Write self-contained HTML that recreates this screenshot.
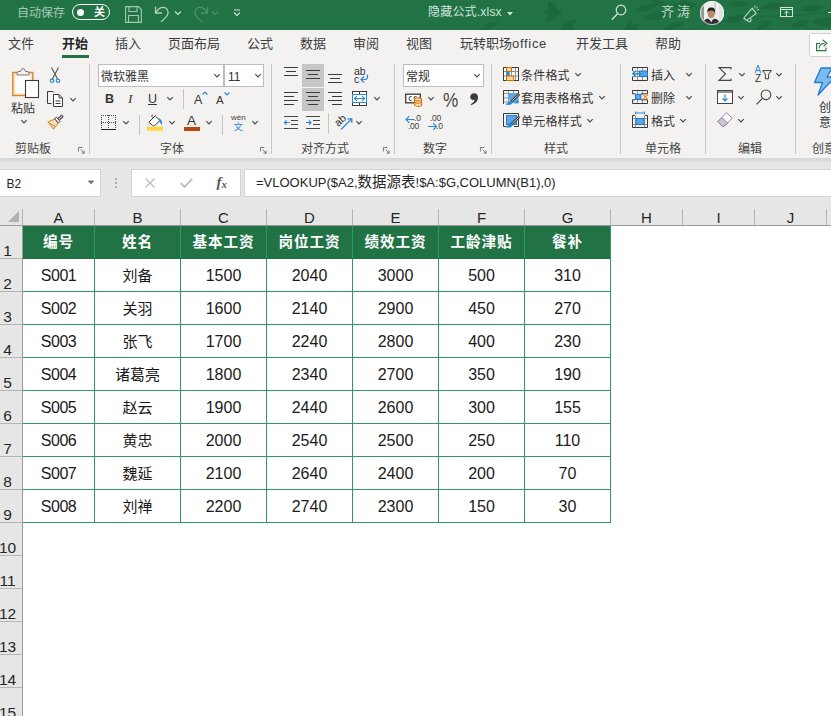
<!DOCTYPE html>
<html lang="zh-CN">
<head>
<meta charset="utf-8">
<title>隐藏公式.xlsx - Excel</title>
<style>
html,body{margin:0;padding:0;}
body{width:831px;height:716px;overflow:hidden;position:relative;background:#e6e6e6;
 font-family:"Liberation Sans","Noto Sans CJK SC",sans-serif;color:#262626;}
.abs{position:absolute;}
svg{position:absolute;overflow:visible;}
/* ---------- title bar ---------- */
#title{position:absolute;z-index:5;left:0;top:0;width:831px;height:29.5px;background:#217346;overflow:hidden;}
#title .t{position:absolute;color:#d2e4da;font-size:12px;line-height:14px;white-space:nowrap;}
/* ---------- tabs ---------- */
#tabs{position:absolute;left:0;top:29px;width:831px;height:31px;background:#f3f2f1;}
#tabs .tab{position:absolute;top:7px;font-size:13px;line-height:15px;color:#3d3d3d;white-space:nowrap;}
/* ---------- ribbon ---------- */
#ribbon{position:absolute;left:0;top:60px;width:831px;height:97.5px;background:#f3f2f1;overflow:hidden;}
#ribbon .sep{position:absolute;top:4px;width:1px;height:90px;background:#c8c6c4;}
#ribbon .lbl{position:absolute;top:81.5px;font-size:12px;line-height:14px;color:#444;white-space:nowrap;}
#ribbon .tx{position:absolute;font-size:12px;line-height:14px;color:#333;white-space:nowrap;}
#ribbon .box{position:absolute;top:4px;height:23px;background:#fff;border:1px solid #bdbdbd;box-sizing:border-box;}
#shadow{position:absolute;left:0;top:157.5px;width:831px;height:5px;background:linear-gradient(#d6d6d6,#d9d9d9 40%,#e6e6e6);}
/* ---------- formula bar ---------- */
.fbox{position:absolute;top:169px;height:28px;background:#fff;border:1px solid #d4d4d4;box-sizing:border-box;}
/* ---------- sheet ---------- */
#sheet{position:absolute;left:0;top:207px;width:831px;height:509px;background:#fff;overflow:hidden;}
#colhdr{position:absolute;left:0;top:0;width:831px;height:18px;background:#e6e6e6;border-bottom:1px solid #9b9b9b;z-index:3;}
#colhdr .c{position:absolute;top:2px;height:16px;font-size:15px;line-height:17px;color:#262626;text-align:center;border-right:1px solid #b5b5b5;box-sizing:border-box;}
#rowhdr{position:absolute;left:0;top:19px;width:22px;height:490px;background:#e6e6e6;border-right:1px solid #9b9b9b;z-index:2;}
#rowhdr .r{position:absolute;left:0;width:22px;height:33px;font-size:15.5px;line-height:16px;color:#262626;text-align:center;border-bottom:1px solid #b5b5b5;box-sizing:border-box;}
#rowhdr .r span{position:absolute;left:-7px;right:0;bottom:-1px;}
#grid{position:absolute;left:22px;top:18px;border-collapse:collapse;table-layout:fixed;}
#grid td{height:33px;padding:0;border:1px solid #2d9a66;text-align:center;font-size:16px;line-height:20px;color:#1a1a1a;background:#fff;box-sizing:border-box;}
#grid td:first-child{font-size:16px;letter-spacing:-0.5px;}
#grid tr:not(.h) td{padding-top:2px;}
#grid td:nth-child(2){font-size:15px;}
#grid tr.h td{background:#217346;color:#fff;font-weight:bold;font-size:14.6px !important;letter-spacing:0.9px;border-color:#217346 #2d9a66;}
</style>
</head>
<body>

<!-- ================= TITLE BAR ================= -->
<div id="title">
  <svg id="leaves" style="left:0;top:0" width="831" height="30" viewBox="0 0 831 30">
    <g fill="#1c683c" opacity="0.85">
      <path d="M481 30 Q486 21 499 22 Q494 30 481 30Z"/>
      <path d="M548 2 Q556 0 556.5 9 L563.5 13.5 L556.5 16 Q553 22 545 21.5 Q549 17 548.5 12.5 L543 12.5 L548 9.5 Z"/>
      <path d="M561 30 Q563 21.5 572 20 Q578.5 19 577 22 L572 24.5 Q572 28 574.5 30 Z"/>
      <path d="M624 30 Q626 22.5 632.5 21 L630.5 25 L639 24 Q636 28 637.5 30 Z"/>
      <path d="M636 10 Q644 2 658 4 Q652 14 636 10Z"/>
      <path d="M642 18 Q652 10 668 14 Q660 24 642 18Z"/>
      <path d="M650 0 Q656 8 668 8 Q666 0 650 0Z"/>
      <path d="M664 30 Q670 20 684 22 Q680 30 664 30Z"/>
      <path d="M672 6 Q682 -2 696 4 Q688 14 672 6Z"/>
      <path d="M724 22 Q732 12 746 16 Q738 26 724 22Z"/>
      <path d="M728 4 Q736 -2 748 4 Q740 10 728 4Z"/>
      <path d="M756 30 Q760 20 772 20 Q770 30 756 30Z"/>
      <path d="M760 8 Q770 0 784 4 Q776 14 760 8Z"/>
      <path d="M790 28 Q796 18 810 20 Q804 30 790 28Z"/>
      <path d="M800 10 Q810 2 824 6 Q816 16 800 10Z"/>
      <path d="M812 22 Q820 16 831 18 V26 Q822 28 812 22Z"/>
      <path d="M690 30 Q730 16 770 16 T831 10" fill="none" stroke="#1c683c" stroke-width="1.2"/>
      <path d="M770 16 Q790 22 815 30" fill="none" stroke="#1c683c" stroke-width="1"/>
    </g>
  </svg>
  <div class="t" style="left:17px;top:5.5px;color:#a9c9b6;">自动保存</div>
  <div class="abs" style="left:72px;top:4px;width:38px;height:16px;border:1px solid #fff;border-radius:8px;box-sizing:border-box;"></div>
  <div class="abs" style="left:76.5px;top:8.5px;width:7.5px;height:7.5px;border-radius:50%;background:#fff;"></div>
  <div class="t" style="left:94px;top:5px;font-size:11px;font-weight:bold;color:#fff;">关</div>

  <!-- save -->
  <svg style="left:125px;top:5.5px" width="17" height="17" viewBox="0 0 17 17">
    <path d="M0.6 0.6 H13.5 L16.4 3.5 V16.4 H0.6 Z" fill="none" stroke="#a3c8b2" stroke-width="1.1"/>
    <path d="M4 0.6 V5.5 H12 V0.6 M3.5 16.4 V9.5 H13.5 V16.4" fill="none" stroke="#a3c8b2" stroke-width="1.1"/>
  </svg>
  <!-- undo -->
  <svg style="left:154px;top:5px" width="16" height="18" viewBox="0 0 16 18">
    <path d="M1.5 1.5 V8 H8 M2 7.5 Q5.5 1.5 10.5 2.5 Q14.5 4 14 8.5 Q13.5 11.5 7 16.8" fill="none" stroke="#b4d2bf" stroke-width="1.3"/>
  </svg>
  <svg style="left:174px;top:10px" width="8" height="6" viewBox="0 0 8 6"><path d="M1 1.5 L4 4.5 L7 1.5" fill="none" stroke="#d3e3da" stroke-width="1.1"/></svg>
  <!-- redo (disabled) -->
  <svg style="left:193px;top:5px" width="16" height="18" viewBox="0 0 16 18">
    <path d="M14.5 1.5 V8 H8 M14 7.5 Q10.5 1.5 5.5 2.5 Q1.5 4 2 8.5 Q2.5 11.5 9 16.8" fill="none" stroke="#4f9069" stroke-width="1.3"/>
  </svg>
  <svg style="left:211px;top:10px" width="8" height="6" viewBox="0 0 8 6"><path d="M1 1.5 L4 4.5 L7 1.5" fill="none" stroke="#4f9069" stroke-width="1.1"/></svg>
  <!-- customise QAT -->
  <svg style="left:233px;top:9px" width="8" height="8" viewBox="0 0 8 8"><path d="M1 1 H7 M1 3.5 L4 6.5 L7 3.5" fill="none" stroke="#d3e3da" stroke-width="1.1"/></svg>
  <!-- title dropdown -->
  <svg style="left:507px;top:11.5px" width="6" height="4" viewBox="0 0 6 4"><path d="M0 0 H6 L3 3.6 Z" fill="#cfe2d6"/></svg>
  <!-- search -->
  <svg style="left:611px;top:4px" width="16" height="17" viewBox="0 0 16 17">
    <circle cx="10" cy="6" r="4.8" fill="none" stroke="#d3e3da" stroke-width="1.2"/>
    <path d="M6.5 9.7 L0.8 15.8" stroke="#d3e3da" stroke-width="1.3" fill="none"/>
  </svg>
  <!-- avatar -->
  <svg style="left:700px;top:1px" width="24" height="24" viewBox="0 0 24 24">
    <defs><clipPath id="avc"><circle cx="12" cy="12" r="12"/></clipPath></defs>
    <g clip-path="url(#avc)">
      <rect width="24" height="24" fill="#eef0ee"/>
      <rect x="0" y="0" width="4" height="24" fill="#8c978f"/>
      <rect x="14" y="0" width="2" height="14" fill="#cfd4d0"/>
      <rect x="19" y="0" width="5" height="24" fill="#dfe3df"/>
      <path d="M2 24 Q3 18.5 8 17.5 L11 20 L14.5 17.5 Q19.5 18.5 20.5 24 Z" fill="#2d2f36"/>
      <path d="M9.6 18 L11.2 21.5 L12.8 18 Z" fill="#f1f1f1"/>
      <ellipse cx="11.2" cy="12.6" rx="3.4" ry="4.6" fill="#b98a68"/>
      <path d="M7.4 12 Q6.8 6.6 11.2 6.6 Q15.8 6.6 15 12 Q14.2 9.2 11.2 9.6 Q8.2 9.2 7.4 12Z" fill="#211d1b"/>
    </g>
    <circle cx="12" cy="12" r="11.6" fill="none" stroke="#f4f6f4" stroke-width="0.8"/>
  </svg>
  <!-- feedback megaphone -->
  <svg style="left:742px;top:5px" width="18" height="18" viewBox="0 0 18 18">
    <path d="M1.8 13 L10.2 3.2 L14.2 8.6 L4.6 15.4 Z" fill="none" stroke="#c3dacb" stroke-width="1.1" stroke-linejoin="round"/>
    <path d="M5.2 15.2 Q6.8 17.6 8.8 16 Q9.6 15 8.6 13.2" fill="none" stroke="#c3dacb" stroke-width="1.1"/>
    <path d="M12.6 2.6 L13.4 0.6 M15 5.2 L17 4.4 M14 3.6 L15.8 1.8" stroke="#c3dacb" stroke-width="1" fill="none"/>
  </svg>
  <!-- ribbon display -->
  <svg style="left:780px;top:7px" width="13" height="10" viewBox="0 0 13 10">
    <rect x="0.5" y="0.5" width="12" height="9" fill="none" stroke="#d3e3da" stroke-width="1"/>
    <path d="M0.5 2.5 H12.5 M6.5 9 V4.2 M4.3 6.2 L6.5 4 L8.7 6.2" fill="none" stroke="#d3e3da" stroke-width="1"/>
  </svg>
  <div class="abs" style="left:828px;top:12px;width:6px;height:1px;background:#d3e3da;"></div>
  <div class="t" style="left:428px;top:5px;font-size:12px;letter-spacing:0.2px;">隐藏公式.xlsx</div>
  <div class="t" style="left:661px;top:5px;font-size:13px;letter-spacing:3px;color:#c3dacb;">齐涛</div>
</div>

<!-- ================= TABS ================= -->
<div id="tabs">
  <div class="tab" style="left:8px;">文件</div>
  <div class="tab" style="left:62px;font-weight:bold;color:#262626;">开始</div>
  <div class="abs" style="left:62px;top:26px;width:27px;height:3px;background:#217346;"></div>
  <div class="tab" style="left:115px;">插入</div>
  <div class="tab" style="left:168px;">页面布局</div>
  <div class="tab" style="left:247px;">公式</div>
  <div class="tab" style="left:300px;">数据</div>
  <div class="tab" style="left:353px;">审阅</div>
  <div class="tab" style="left:406px;">视图</div>
  <div class="tab" style="left:460px;">玩转职场<span style="letter-spacing:0.7px;">office</span></div>
  <div class="tab" style="left:576px;">开发工具</div>
  <div class="tab" style="left:655px;">帮助</div>
  <div class="abs" style="left:808.5px;top:3.5px;width:30px;height:24px;background:#fff;border:1px solid #d2d0ce;border-radius:3px;box-sizing:border-box;"></div>
  <svg style="left:815.5px;top:10px" width="12" height="13" viewBox="0 0 12 13">
    <path d="M4 4.5 H0.6 V11.6 H10 V8.5" fill="none" stroke="#217346" stroke-width="1.1"/>
    <path d="M3 9.5 Q3.2 4.6 8.6 4.2 M6.6 0.8 L10.8 4.2 L7.6 7.4" fill="none" stroke="#217346" stroke-width="1.1"/>
  </svg>
</div>

<!-- ================= RIBBON ================= -->
<div id="ribbon">
  <svg width="0" height="0" style="left:0;top:0">
    <defs>
      <symbol id="chev" viewBox="0 0 8 6" overflow="visible"><path d="M1.3 1.2 L4 3.9 L6.7 1.2" fill="none" stroke="#444" stroke-width="1.1"/></symbol>
      <symbol id="launch" viewBox="0 0 8 8" overflow="visible"><path d="M0.5 5 V0.5 H5 M3 3 L7 7 M7 4 V7 H4" fill="none" stroke="#666" stroke-width="1"/></symbol>
    </defs>
  </svg>

  <!-- ===== clipboard group ===== -->
  <svg style="left:11px;top:6px" width="30" height="34" viewBox="0 0 30 34">
    <rect x="1.8" y="6.5" width="20" height="23" fill="#fbe3c3" stroke="#d9882b" stroke-width="1.4"/>
    <rect x="4.2" y="8.8" width="15.2" height="18.6" fill="#fdfdfd"/>
    <path d="M6 9 V7 Q6 5.5 8 5.5 H9.5 Q10 2.5 12 2.5 Q14 2.5 14.5 5.5 H16 Q18 5.5 18 7 V9 Z" fill="#f3f2f1" stroke="#7a7a7a" stroke-width="1"/>
    <rect x="14.5" y="14.5" width="13" height="17" fill="#fff" stroke="#3b3b3b" stroke-width="1.1"/>
  </svg>
  <div class="tx" style="left:11px;top:42px;">粘贴</div>
  <svg style="left:20px;top:59px" width="8" height="6"><use href="#chev"/></svg>

  <!-- scissors -->
  <svg style="left:48px;top:6px" width="14" height="18" viewBox="0 0 14 18">
    <path d="M3.5 1.5 L9.6 13 M10.5 1.5 L4.4 13" stroke="#555" stroke-width="1.1" fill="none"/>
    <circle cx="4" cy="14.8" r="1.7" fill="none" stroke="#2b88d8" stroke-width="1.2"/>
    <circle cx="10" cy="14.8" r="1.7" fill="none" stroke="#2b88d8" stroke-width="1.2"/>
  </svg>
  <!-- copy -->
  <svg style="left:46px;top:30px" width="18" height="18" viewBox="0 0 18 18">
    <path d="M5.5 13.5 H1.5 V1.5 H7 L8 2.5" fill="none" stroke="#3b3b3b" stroke-width="1"/>
    <path d="M7.5 4.5 H13 L16.5 8 V16.5 H7.5 Z" fill="#fff" stroke="#3b3b3b" stroke-width="1"/>
    <path d="M13 4.5 V8 H16.5 M9.5 11 H14.5 M9.5 13.5 H14.5" fill="none" stroke="#3b3b3b" stroke-width="1"/>
  </svg>
  <svg style="left:69px;top:37px" width="8" height="6"><use href="#chev"/></svg>
  <!-- format painter -->
  <svg style="left:47px;top:54px" width="17" height="16" viewBox="0 0 17 16">
    <path d="M1 8 L8 5 L11 9.5 L6.5 15 Z" fill="#fbe3c3" stroke="#d9882b" stroke-width="1.1" stroke-linejoin="round"/>
    <path d="M3 9.5 L8.5 12.5" stroke="#d9882b" stroke-width="1" fill="none"/>
    <path d="M7.5 4.5 L11.5 9 L13 7.5 L9.5 3.2 Z" fill="#fff" stroke="#444" stroke-width="1"/>
    <path d="M11 4.5 L14.5 1.2 L16 2.7 L12.5 6" fill="none" stroke="#444" stroke-width="1.1"/>
  </svg>
  <div class="lbl" style="left:15px;">剪贴板</div>
  <svg style="left:78px;top:87px" width="7" height="7"><use href="#launch"/></svg>
  <div class="sep" style="left:89px;"></div>

  <!-- ===== font group ===== -->
  <div class="box" style="left:98px;width:126px;"></div>
  <div class="box" style="left:224px;width:40px;"></div>
  <div class="tx" style="left:101px;top:10px;">微软雅黑</div>
  <svg style="left:213px;top:13px" width="8" height="6"><use href="#chev"/></svg>
  <div class="tx" style="left:228px;top:10px;">11</div>
  <svg style="left:254px;top:13px" width="8" height="6"><use href="#chev"/></svg>

  <div class="tx" style="left:105px;top:31px;font-weight:bold;font-size:12.5px;line-height:16px;">B</div>
  <div class="tx" style="left:128px;top:31px;font-style:italic;font-size:13.5px;line-height:16px;font-family:'Liberation Serif',serif;">I</div>
  <div class="tx" style="left:148px;top:31px;font-size:12.5px;line-height:16px;">U</div><div class="abs" style="left:148px;top:44px;width:9px;height:1px;background:#333;"></div>
  <svg style="left:166px;top:36px" width="8" height="6"><use href="#chev"/></svg>
  <div class="abs" style="left:183px;top:29px;width:1px;height:20px;background:#c8c6c4;"></div>
  <div class="tx" style="left:194px;top:32px;font-size:12.5px;line-height:16px;">A</div>
  <svg style="left:202px;top:31px" width="6" height="4" viewBox="0 0 6 4"><path d="M0.5 3.5 L3 1 L5.5 3.5" fill="none" stroke="#2b88d8" stroke-width="1.2"/></svg>
  <div class="tx" style="left:216px;top:33px;font-size:11.5px;line-height:15px;">A</div>
  <svg style="left:224px;top:32px" width="6" height="4" viewBox="0 0 6 4"><path d="M0.5 0.5 L3 3 L5.5 0.5" fill="none" stroke="#2b88d8" stroke-width="1.2"/></svg>

  <!-- borders -->
  <svg style="left:101px;top:55px" width="16" height="16" viewBox="0 0 16 16">
    <path d="M0 0.5 H15 M0.5 0 V14 M14.5 0 V14 M7.5 0 V14 M0 7.5 H15" fill="none" stroke="#444" stroke-width="1" stroke-dasharray="1 1" shape-rendering="crispEdges"/>
    <path d="M0 14.5 H15" stroke="#222" stroke-width="1.4" shape-rendering="crispEdges"/>
  </svg>
  <svg style="left:122px;top:60px" width="8" height="6"><use href="#chev"/></svg>
  <div class="abs" style="left:139px;top:55px;width:1px;height:20px;background:#c8c6c4;"></div>
  <!-- fill colour -->
  <svg style="left:147px;top:54px" width="17" height="17" viewBox="0 0 17 17">
    <path d="M2.2 7.8 L8.2 1.8 L13 6.6 L7.6 11.6 Q6.6 12.4 5.6 11.4 L2.2 8.8 Q1.8 8.3 2.2 7.8 Z" fill="#fff" stroke="#3b3b3b" stroke-width="1" stroke-linejoin="round"/>
    <path d="M6.2 3.8 L4.8 2.4 Q4.4 1 5.8 1.2" fill="none" stroke="#3b3b3b" stroke-width="1"/>
    <path d="M12.2 4.4 Q15.6 6.6 14.6 10.4 Q13.2 8.4 12.8 6.4 Z" fill="#2b88d8" stroke="#2b88d8" stroke-width="0.7"/>
    <rect x="0" y="12.7" width="16" height="4" fill="#ffd53e"/>
  </svg>
  <svg style="left:168px;top:60px" width="8" height="6"><use href="#chev"/></svg>
  <!-- font colour -->
  <div class="tx" style="left:187px;top:53px;font-size:13.5px;line-height:16px;">A</div>
  <div class="abs" style="left:184px;top:67px;width:16px;height:4px;background:#b9480f;"></div>
  <svg style="left:205px;top:60px" width="8" height="6"><use href="#chev"/></svg>
  <div class="abs" style="left:222px;top:55px;width:1px;height:20px;background:#c8c6c4;"></div>
  <!-- phonetic -->
  <div class="tx" style="left:231px;top:53px;font-size:8px;line-height:9px;color:#444;">wén</div>
  <div class="tx" style="left:233.5px;top:62px;font-size:9.5px;line-height:10px;color:#2b88d8;">文</div>
  <svg style="left:251px;top:60px" width="8" height="6"><use href="#chev"/></svg>
  <div class="lbl" style="left:160px;">字体</div>
  <svg style="left:260px;top:87px" width="7" height="7"><use href="#launch"/></svg>
  <div class="sep" style="left:271px;"></div>

  <!-- ===== alignment group ===== -->
  <div class="abs" style="left:302px;top:4px;width:22px;height:22.7px;background:#c8c6c4;"></div>
  <div class="abs" style="left:302px;top:28.2px;width:22px;height:22.5px;background:#c8c6c4;"></div>
  <svg style="left:284px;top:7px" width="14" height="14" viewBox="0 0 14 14"><path d="M0 0.5 H14 M2 4.5 H12 M0 8.5 H14" stroke="#3b3b3b" stroke-width="1.1" fill="none"/></svg>
  <svg style="left:306px;top:10px" width="14" height="14" viewBox="0 0 14 14"><path d="M0 0.5 H14 M2 4.5 H12 M0 8.5 H14" stroke="#3b3b3b" stroke-width="1.1" fill="none"/></svg>
  <svg style="left:328px;top:14px" width="14" height="14" viewBox="0 0 14 14"><path d="M0 0.5 H14 M2 4.5 H12 M0 8.5 H14" stroke="#3b3b3b" stroke-width="1.1" fill="none"/></svg>
  <!-- wrap text -->
  <div class="tx" style="left:354px;top:5px;font-size:10.5px;line-height:12px;color:#333;">ab</div>
  <div class="tx" style="left:354px;top:13px;font-size:10.5px;line-height:12px;color:#333;">c</div>
  <svg style="left:360px;top:14px" width="9" height="10" viewBox="0 0 9 10"><path d="M7.5 0.5 V3 Q7.5 5.5 5 5.5 H1.2 M4 2.5 L1 5.5 L4 8.5" fill="none" stroke="#2b88d8" stroke-width="1.2"/></svg>
  <svg style="left:284px;top:32px" width="14" height="14" viewBox="0 0 14 14"><path d="M0 0.5 H14 M0 4.5 H10 M0 8.5 H14 M0 12.5 H10" stroke="#3b3b3b" stroke-width="1.1" fill="none"/></svg>
  <svg style="left:306px;top:32px" width="14" height="14" viewBox="0 0 14 14"><path d="M0 0.5 H14 M2 4.5 H12 M0 8.5 H14 M2 12.5 H12" stroke="#3b3b3b" stroke-width="1.1" fill="none"/></svg>
  <svg style="left:328px;top:32px" width="14" height="14" viewBox="0 0 14 14"><path d="M0 0.5 H14 M4 4.5 H14 M0 8.5 H14 M4 12.5 H14" stroke="#3b3b3b" stroke-width="1.1" fill="none"/></svg>
  <!-- merge & center -->
  <svg style="left:352px;top:31px" width="16" height="15" viewBox="0 0 16 15">
    <rect x="0.5" y="0.5" width="14" height="14" fill="#fff" stroke="#3b3b3b" stroke-width="1"/>
    <path d="M7.5 0.5 V3.5 M7.5 11.5 V14.5" stroke="#3b3b3b" stroke-width="1" fill="none"/>
    <rect x="0.5" y="3.5" width="14" height="8" fill="#fff" stroke="#2b88d8" stroke-width="1"/>
    <path d="M2.5 7.5 H12.5 M4.8 5.2 L2.5 7.5 L4.8 9.8 M10.2 5.2 L12.5 7.5 L10.2 9.8" fill="none" stroke="#2b88d8" stroke-width="1.1"/>
  </svg>
  <svg style="left:373px;top:36px" width="8" height="6"><use href="#chev"/></svg>
  <!-- indent -->
  <svg style="left:284px;top:55px" width="15" height="15" viewBox="0 0 15 15">
    <path d="M0 1.5 H14 M7 5.5 H14 M7 9.5 H14 M0 13.5 H14" stroke="#444" stroke-width="1" fill="none"/>
    <path d="M0.5 7.5 H5.5 M2.5 5.5 L0.5 7.5 L2.5 9.5" stroke="#2b88d8" stroke-width="1.1" fill="none"/>
  </svg>
  <svg style="left:306px;top:55px" width="15" height="15" viewBox="0 0 15 15">
    <path d="M0 1.5 H14 M7 5.5 H14 M7 9.5 H14 M0 13.5 H14" stroke="#444" stroke-width="1" fill="none"/>
    <path d="M0 7.5 H5 M3 5.5 L5 7.5 L3 9.5" stroke="#2b88d8" stroke-width="1.1" fill="none"/>
  </svg>
  <div class="abs" style="left:328px;top:53px;width:1px;height:21px;background:#c8c6c4;"></div>
  <!-- orientation -->
  <div class="tx" style="left:334px;top:53.5px;font-size:10.5px;line-height:12px;color:#333;transform:rotate(-42deg);transform-origin:center center;">ab</div>
  <svg style="left:340px;top:57px" width="14" height="14" viewBox="0 0 14 14"><path d="M1 12.5 L11.5 2 M7.5 1.8 H11.8 V6" fill="none" stroke="#2b88d8" stroke-width="1.2"/></svg>
  <svg style="left:355px;top:60px" width="8" height="6"><use href="#chev"/></svg>
  <div class="lbl" style="left:301px;">对齐方式</div>
  <svg style="left:383px;top:87px" width="7" height="7"><use href="#launch"/></svg>
  <div class="sep" style="left:394px;"></div>

  <!-- ===== number group ===== -->
  <div class="box" style="left:403px;width:81px;"></div>
  <div class="tx" style="left:406px;top:10px;">常规</div>
  <svg style="left:473px;top:13px" width="8" height="6"><use href="#chev"/></svg>
  <!-- accounting format -->
  <svg style="left:405px;top:33px" width="18" height="15" viewBox="0 0 18 15">
    <rect x="0.7" y="1.2" width="14.6" height="8.6" fill="#fff" stroke="#3b3b3b" stroke-width="1.3"/>
    <path d="M6.6 3.6 Q4 3 4 5.5 Q4 8 6.6 7.4 M11.6 3.6 Q9 3 9 5.5 Q9 8 11.6 7.4" fill="none" stroke="#3b3b3b" stroke-width="1"/>
    <path d="M9.6 6.4 V12.4 Q13 14.4 16.6 12.4 V6.4" fill="#fbe3c3" stroke="#d9780f" stroke-width="1.1"/>
    <ellipse cx="13.1" cy="6.4" rx="3.5" ry="1.5" fill="#fbe3c3" stroke="#d9780f" stroke-width="1.1"/>
    <path d="M9.6 9.4 Q13 11.4 16.6 9.4" fill="none" stroke="#d9780f" stroke-width="1"/>
  </svg>
  <svg style="left:427px;top:36px" width="8" height="6"><use href="#chev"/></svg>
  <div class="tx" style="left:443px;top:29px;font-size:19.5px;line-height:22px;color:#444;transform:scaleX(0.88);transform-origin:left top;">%</div>
  <svg style="left:469px;top:33px" width="10" height="13" viewBox="0 0 10 13"><path d="M5.2 0.3 C7.8 0.3 9 2.2 9 4.6 C9 8.2 6.2 11 2 12.2 L1.6 11.2 C4 10 5.4 8.6 5.6 6.6 C5 6.9 4.4 7 3.8 6.9 C2 6.7 1 5.3 1.2 3.6 C1.4 1.6 3 0.3 5.2 0.3 Z" fill="#3b3b3b"/></svg>
  <!-- increase / decrease decimal -->
  <svg style="left:405px;top:55px" width="10" height="9" viewBox="0 0 10 9">
    <path d="M1 4.5 H9.5 M4.3 1.2 L1 4.5 L4.3 7.8" fill="none" stroke="#2b88d8" stroke-width="1.2"/>
  </svg>
  <div class="tx" style="left:414px;top:54px;font-size:8.5px;line-height:9px;color:#444;">.0</div>
  <div class="tx" style="left:408px;top:62px;font-size:8.5px;line-height:9px;color:#444;letter-spacing:-0.3px;">.00</div>
  <div class="tx" style="left:430px;top:54px;font-size:8.5px;line-height:9px;color:#444;letter-spacing:-0.3px;">.00</div>
  <svg style="left:428px;top:62px" width="10" height="9" viewBox="0 0 10 9">
    <path d="M0 4.5 H8.5 M5.2 1.2 L8.5 4.5 L5.2 7.8" fill="none" stroke="#2b88d8" stroke-width="1.2"/>
  </svg>
  <div class="tx" style="left:436px;top:62px;font-size:8.5px;line-height:9px;color:#444;">.0</div>
  <div class="lbl" style="left:423px;">数字</div>
  <svg style="left:480px;top:87px" width="7" height="7"><use href="#launch"/></svg>
  <div class="sep" style="left:491px;"></div>

  <!-- ===== styles group ===== -->
  <svg style="left:503px;top:7px" width="17" height="14" viewBox="0 0 17 14">
    <rect x="0.5" y="0.5" width="15" height="13" fill="#fff" stroke="#3b3b3b" stroke-width="1"/>
    <path d="M3.5 1 V13 M8.5 1 V13 M12.5 1 V13 M1 4.5 H15 M1 9 H15" stroke="#8c9a8c" stroke-width="1" fill="none"/>
    <rect x="3.5" y="0.5" width="5" height="4" fill="#fbd59b" stroke="#d96b00" stroke-width="1"/>
    <rect x="3.5" y="4.5" width="3.2" height="4.5" fill="#2b88d8"/>
    <rect x="3.5" y="9" width="7.2" height="4.5" fill="#fbd59b" stroke="#d96b00" stroke-width="1"/>
  </svg>
  <div class="tx" style="left:521px;top:8.5px;letter-spacing:0.2px;">条件格式</div>
  <svg style="left:574px;top:12px" width="8" height="6"><use href="#chev"/></svg>

  <svg style="left:503px;top:30px" width="17" height="16" viewBox="0 0 17 16">
    <path d="M0.5 14 V0.5 H15.5 V4" fill="none" stroke="#3b3b3b" stroke-width="1"/>
    <path d="M1 3.5 H15 M5.5 1 V13.5 M10.5 1 V3.5 M1 8 H5.5 M1 12 H5.5" stroke="#8c9a8c" stroke-width="1" fill="none"/>
    <path d="M5.5 3.5 H15.5 V13.5 H11 L5.5 9 Z" fill="#5aa7e6"/>
    <path d="M12 13 H15.5 V9.5 Z" fill="#2b88d8"/>
    <path d="M15.6 4.8 L8.6 11.399999999999999" stroke="#3b3b3b" stroke-width="2.6" stroke-linecap="round" fill="none"/>
    <path d="M15.4 5.0 L9 11.0" stroke="#d8d8d8" stroke-width="0.9" stroke-linecap="round" fill="none"/>
    <path d="M9.6 12.399999999999999 Q8.6 14.399999999999999 6.4 14.600000000000001 Q4.4 14.399999999999999 3 14.399999999999999 Q5.6 13.2 7.4 10.399999999999999 Z" fill="#2b88d8" stroke="#2b88d8" stroke-width="0.8" stroke-linejoin="round"/>
  </svg>
  <div class="tx" style="left:521px;top:31.5px;letter-spacing:0.1px;">套用表格格式</div>
  <svg style="left:598px;top:35px" width="8" height="6"><use href="#chev"/></svg>

  <svg style="left:503px;top:53px" width="17" height="16" viewBox="0 0 17 16">
    <path d="M0.5 13.5 V0.5 H15.5 V13.5 H11" fill="none" stroke="#3b3b3b" stroke-width="1"/>
    <path d="M0.5 13.5 H3" fill="none" stroke="#3b3b3b" stroke-width="1"/>
    <rect x="3.5" y="2.5" width="10" height="9" fill="#5aa7e6" stroke="#2b7fd0" stroke-width="1"/>
    <path d="M15.6 4.4 L8.6 11.0" stroke="#3b3b3b" stroke-width="2.6" stroke-linecap="round" fill="none"/>
    <path d="M15.4 4.6000000000000005 L9 10.600000000000001" stroke="#d8d8d8" stroke-width="0.9" stroke-linecap="round" fill="none"/>
    <path d="M9.6 12.0 Q8.6 14.0 6.4 14.200000000000001 Q4.4 14.0 3 14.0 Q5.6 12.8 7.4 10.0 Z" fill="#2b88d8" stroke="#2b88d8" stroke-width="0.8" stroke-linejoin="round"/>
  </svg>
  <div class="tx" style="left:521px;top:54.5px;letter-spacing:0.2px;">单元格样式</div>
  <svg style="left:586px;top:58px" width="8" height="6"><use href="#chev"/></svg>
  <div class="lbl" style="left:544px;">样式</div>
  <div class="sep" style="left:620px;"></div>

  <!-- ===== cells group ===== -->
  <svg style="left:632px;top:7px" width="17" height="14" viewBox="0 0 17 14">
    <path d="M5.5 1 V13 M10.5 1 V13 M1 4.5 H15 M1 9.5 H15" fill="none" stroke="#8c9a8c" stroke-width="1"/>
    <path d="M0.5 4 V0.5 H15.5 V13.5 H0.5 V9.5" fill="none" stroke="#3b3b3b" stroke-width="1"/>
    <rect x="7.5" y="4" width="8" height="5.5" fill="#5aa7e6" stroke="#1f74c8" stroke-width="1"/>
    <path d="M0.8 6.8 H9.5 M3.8 3.8 L0.8 6.8 L3.8 9.8" fill="none" stroke="#2b88d8" stroke-width="1.4"/>
  </svg>
  <div class="tx" style="left:651px;top:8.5px;">插入</div>
  <svg style="left:685px;top:12px" width="8" height="6"><use href="#chev"/></svg>

  <svg style="left:632px;top:30px" width="17" height="14" viewBox="0 0 17 14">
    <path d="M5.5 1 V3.5 M10.5 1 V3.5 M5.5 10 V13 M10.5 10 V13" fill="none" stroke="#8c9a8c" stroke-width="1"/>
    <path d="M0.5 3.8 V0.5 H15.5 V3.8 M0.5 9.8 V13.5 H15.5 V9.8" fill="none" stroke="#3b3b3b" stroke-width="1"/>
    <path d="M0.5 3.8 H3 M0.5 9.8 H3 M9 3.8 H15.5 M9 9.8 H15.5" fill="none" stroke="#3b3b3b" stroke-width="1"/>
    <rect x="3.5" y="4.3" width="5.4" height="5.2" fill="#5aa7e6" stroke="#1f74c8" stroke-width="1"/>
    <path d="M10.8 4.4 L15.8 9.4 M15.8 4.4 L10.8 9.4" stroke="#e8912d" stroke-width="1.3" fill="none"/>
  </svg>
  <div class="tx" style="left:651px;top:31.5px;">删除</div>
  <svg style="left:685px;top:35px" width="8" height="6"><use href="#chev"/></svg>

  <svg style="left:632px;top:51px" width="17" height="17" viewBox="0 0 17 17">
    <path d="M3.5 0.5 V3.5 M12.5 0.5 V3.5 M3.5 2 H12.5" fill="none" stroke="#2b88d8" stroke-width="1"/>
    <path d="M3.5 5 V16 M12.5 5 V16 M1 7.5 H15 M1 13.5 H15" fill="none" stroke="#8c9a8c" stroke-width="1"/>
    <path d="M3 4.5 H0.5 V16.5 H15.5 V4.5 H13" fill="none" stroke="#3b3b3b" stroke-width="1"/>
    <rect x="4" y="7.5" width="8" height="6" fill="#5aa7e6" stroke="#1f74c8" stroke-width="1"/>
  </svg>
  <div class="tx" style="left:651px;top:54.5px;">格式</div>
  <svg style="left:679px;top:58px" width="8" height="6"><use href="#chev"/></svg>
  <div class="lbl" style="left:645px;">单元格</div>
  <div class="sep" style="left:705px;"></div>

  <!-- ===== editing group ===== -->
  <svg style="left:718px;top:7px" width="14" height="14" viewBox="0 0 14 14"><path d="M13 2.5 V0.6 H1 L7.5 7 L1 13.4 H13 V11.5" fill="none" stroke="#444" stroke-width="1.1"/></svg>
  <svg style="left:738px;top:12px" width="8" height="6"><use href="#chev"/></svg>
  <div class="tx" style="left:754.5px;top:5px;font-size:10px;line-height:10px;color:#2b88d8;">A</div>
  <div class="tx" style="left:755px;top:14px;font-size:10px;line-height:10px;color:#333;">Z</div>
  <svg style="left:762px;top:10px" width="10" height="10" viewBox="0 0 10 10"><path d="M0.6 0.6 H9.4 L6.6 4.2 V8.8 H3.4 V4.2 Z" fill="#f3f2f1" stroke="#3b3b3b" stroke-width="1" stroke-linejoin="round"/></svg>
  <svg style="left:775px;top:12px" width="8" height="6"><use href="#chev"/></svg>

  <svg style="left:717px;top:30px" width="16" height="14" viewBox="0 0 16 14">
    <rect x="0.5" y="0.5" width="15" height="13" fill="#fff" stroke="#444" stroke-width="1"/>
    <path d="M0.5 2 H15.5" stroke="#444" stroke-width="1.2"/>
    <path d="M8 4.5 V11 M5.5 8.5 L8 11 L10.5 8.5" fill="none" stroke="#2b88d8" stroke-width="1.2"/>
  </svg>
  <svg style="left:737px;top:35px" width="8" height="6"><use href="#chev"/></svg>
  <svg style="left:756px;top:29px" width="16" height="16" viewBox="0 0 16 16">
    <circle cx="10" cy="5.8" r="4.8" fill="none" stroke="#444" stroke-width="1.1"/>
    <path d="M6.5 9.3 L0.5 15.3" stroke="#444" stroke-width="1.2" fill="none"/>
  </svg>
  <svg style="left:775px;top:35px" width="8" height="6"><use href="#chev"/></svg>

  <svg style="left:717px;top:52px" width="16" height="16" viewBox="0 0 16 16">
    <path d="M0.8 9.5 L9.5 0.8 L15.2 6 L7 14.5 H5.5 Z" fill="#fff" stroke="#9a7fae" stroke-width="1" stroke-linejoin="round"/>
    <path d="M0.8 9.5 L4.8 5.5 L10.5 11 L7 14.5 H5.5 Z" fill="#cfc3d8" stroke="#9a7fae" stroke-width="1" stroke-linejoin="round"/>
  </svg>
  <svg style="left:737px;top:58px" width="8" height="6"><use href="#chev"/></svg>
  <div class="lbl" style="left:738px;">编辑</div>
  <div class="sep" style="left:795px;"></div>

  <!-- ===== ideas group ===== -->
  <svg style="left:813px;top:7px" width="24" height="30" viewBox="0 0 24 30">
    <path d="M8 1 H19 L14 10 H22 L5 28 L9.5 15.5 H1.5 Z" fill="#7cbcf0" stroke="#1f7ad1" stroke-width="1.3" stroke-linejoin="round"/>
  </svg>
  <div class="tx" style="left:819px;top:41px;">创</div>
  <div class="tx" style="left:819px;top:56px;">意</div>
  <div class="lbl" style="left:812px;">创意</div>

</div>
<div id="shadow"></div>

<!-- ================= FORMULA BAR ================= -->
<div class="fbox" style="left:-1px;width:102px;"></div>
<div class="abs" style="left:6.5px;top:177px;font-size:12px;line-height:14px;color:#262626;">B2</div>
<div class="fbox" style="left:131px;width:110px;"></div>
<svg style="left:87px;top:180px" width="8" height="5" viewBox="0 0 8 5"><path d="M0.5 0.5 H7.5 L4 4.5 Z" fill="#777"/></svg>
<div class="abs" style="left:115px;top:178px;width:2px;height:2px;background:#b0b0b0;"></div>
<div class="abs" style="left:115px;top:182px;width:2px;height:2px;background:#b0b0b0;"></div>
<div class="abs" style="left:115px;top:186px;width:2px;height:2px;background:#b0b0b0;"></div>
<svg style="left:145px;top:178px" width="10" height="10" viewBox="0 0 10 10"><path d="M0.5 0.5 L9.5 9.5 M9.5 0.5 L0.5 9.5" stroke="#bdbdbd" stroke-width="1.3" fill="none"/></svg>
<svg style="left:180px;top:178px" width="13" height="10" viewBox="0 0 13 10"><path d="M0.8 5.2 L4.6 9 L12.2 0.8" stroke="#bdbdbd" stroke-width="1.9" fill="none"/></svg>
<div class="abs" style="left:216.5px;top:173.5px;font-family:'Liberation Serif',serif;font-style:italic;font-size:15px;line-height:17px;color:#555;white-space:nowrap;"><b>f</b><span style="font-size:11px;font-weight:bold;position:relative;top:1px;">x</span></div>

<div class="fbox" style="left:244px;width:600px;"></div>
<div class="abs" id="ftext" style="left:256px;top:175px;font-size:13px;line-height:15px;color:#262626;white-space:nowrap;">=VLOOKUP($A2,<span style="font-size:14.5px;line-height:0;">数据源表</span>!$A:$G,COLUMN(B1),0)</div>

<!-- ================= SHEET ================= -->
<div id="sheet">
  <div id="colhdr">
    <div class="c" style="left:0;width:23px;"></div>
    <svg style="left:8px;top:4px" width="11" height="11" viewBox="0 0 11 11"><path d="M11 0 V11 H0 Z" fill="#b3b1b1"/></svg>
    <div class="c" style="left:23px;width:72px;">A</div>
    <div class="c" style="left:95px;width:86px;">B</div>
    <div class="c" style="left:181px;width:86px;">C</div>
    <div class="c" style="left:267px;width:86px;">D</div>
    <div class="c" style="left:353px;width:86px;">E</div>
    <div class="c" style="left:439px;width:86px;">F</div>
    <div class="c" style="left:525px;width:86px;">G</div>
    <div class="c" style="left:611px;width:72px;">H</div>
    <div class="c" style="left:683px;width:72px;">I</div>
    <div class="c" style="left:755px;width:72px;">J</div>
  </div>
  <div id="rowhdr">
    <div class="r" style="top:0px;"><span>1</span></div>
    <div class="r" style="top:33px;"><span>2</span></div>
    <div class="r" style="top:66px;"><span>3</span></div>
    <div class="r" style="top:99px;"><span>4</span></div>
    <div class="r" style="top:132px;"><span>5</span></div>
    <div class="r" style="top:165px;"><span>6</span></div>
    <div class="r" style="top:198px;"><span>7</span></div>
    <div class="r" style="top:231px;"><span>8</span></div>
    <div class="r" style="top:264px;"><span>9</span></div>
    <div class="r" style="top:297px;"><span>10</span></div>
    <div class="r" style="top:330px;"><span>11</span></div>
    <div class="r" style="top:363px;"><span>12</span></div>
    <div class="r" style="top:396px;"><span>13</span></div>
    <div class="r" style="top:429px;"><span>14</span></div>
    <div class="r" style="top:462px;"><span>15</span></div>
  </div>
  <table id="grid">
    <colgroup><col style="width:72px"><col style="width:86px"><col style="width:86px"><col style="width:86px"><col style="width:86px"><col style="width:86px"><col style="width:86px"></colgroup>
    <tr class="h"><td>编号</td><td>姓名</td><td>基本工资</td><td>岗位工资</td><td>绩效工资</td><td>工龄津贴</td><td>餐补</td></tr>
    <tr><td>S001</td><td>刘备</td><td>1500</td><td>2040</td><td>3000</td><td>500</td><td>310</td></tr>
    <tr><td>S002</td><td>关羽</td><td>1600</td><td>2140</td><td>2900</td><td>450</td><td>270</td></tr>
    <tr><td>S003</td><td>张飞</td><td>1700</td><td>2240</td><td>2800</td><td>400</td><td>230</td></tr>
    <tr><td>S004</td><td>诸葛亮</td><td>1800</td><td>2340</td><td>2700</td><td>350</td><td>190</td></tr>
    <tr><td>S005</td><td>赵云</td><td>1900</td><td>2440</td><td>2600</td><td>300</td><td>155</td></tr>
    <tr><td>S006</td><td>黄忠</td><td>2000</td><td>2540</td><td>2500</td><td>250</td><td>110</td></tr>
    <tr><td>S007</td><td>魏延</td><td>2100</td><td>2640</td><td>2400</td><td>200</td><td>70</td></tr>
    <tr><td>S008</td><td>刘禅</td><td>2200</td><td>2740</td><td>2300</td><td>150</td><td>30</td></tr>
  </table>
</div>

</body>
</html>
